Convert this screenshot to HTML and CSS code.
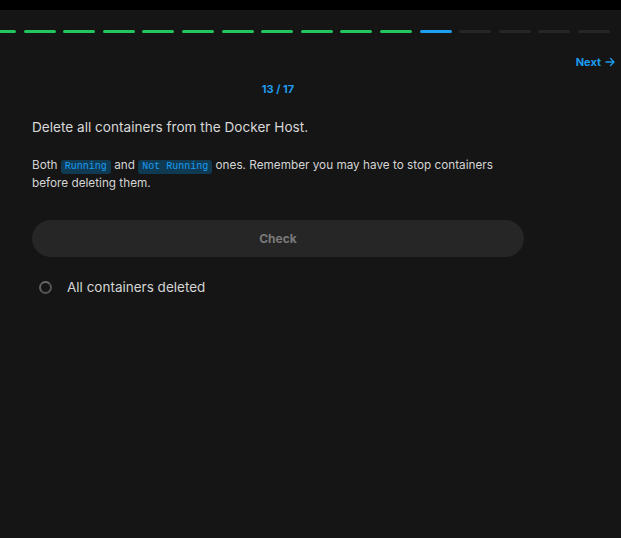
FILE: index.html
```html
<!DOCTYPE html>
<html lang="en">
<head>
<meta charset="utf-8">
<title>Task 13 / 17</title>
<link rel="stylesheet" href="styles.css">
</head>
<body>
<div class="topbar"></div>
<div class="progress">
  <span class="seg done"></span><span class="seg done"></span><span class="seg done"></span><span class="seg done"></span>
  <span class="seg done"></span><span class="seg done"></span><span class="seg done"></span><span class="seg done"></span>
  <span class="seg done"></span><span class="seg done"></span><span class="seg done"></span><span class="seg done"></span>
  <span class="seg current"></span>
  <span class="seg"></span><span class="seg"></span><span class="seg"></span><span class="seg"></span>
</div>
<div class="nav">
  <a class="next" href="#">Next
    <svg width="10" height="10" viewBox="0 0 10 10" fill="none" stroke="currentColor" stroke-width="1.4" stroke-linecap="round" stroke-linejoin="round"><path d="M1 5h8M5.5 1.5L9 5l-3.5 3.5"/></svg>
  </a>
</div>
<main class="content">
  <div class="counter">13 / 17</div>
  <h1 class="title">Delete all containers from the Docker Host.</h1>
  <p class="desc">Both <code>Running</code> and <code>Not Running</code> ones. Remember you may have to stop containers before deleting them.</p>
  <button class="check">Check</button>
  <div class="task">
    <span class="spinner"></span>
    <span class="task-label">All containers deleted</span>
  </div>
</main>
</body>
</html>
```
FILE: styles.css
```css
* { box-sizing: border-box; }
html, body {
  margin: 0;
  padding: 0;
  background: #151515;
  height: 100%;
}
body {
  font-family: Inter, "Noto Sans", sans-serif;
  color: #d4d4d4;
  overflow: hidden;
}
.topbar {
  height: 10px;
  background: #000;
}
.progress {
  display: flex;
  justify-content: flex-end;
  gap: 7.6px;
  padding-right: 11px;
  margin-top: 20px;
  height: 3px;
  overflow: hidden;
}
.seg {
  flex: 0 0 32px;
  height: 3px;
  border-radius: 2px;
  background: #262626;
}
.seg.done { background: #22c55e; }
.seg.current { background: #1ea0f0; }
.nav {
  display: flex;
  justify-content: flex-end;
  padding-right: 6px;
  margin-top: 22px;
}
.next {
  display: flex;
  align-items: center;
  gap: 4px;
  font-size: 11px;
  font-weight: 700;
  color: #1d9bf0;
  text-decoration: none;
  line-height: 14px;
}
.content {
  width: 492px;
  margin-left: 32px;
}
.counter {
  text-align: center;
  font-size: 11px;
  font-weight: 700;
  color: #1d9bf0;
  margin-top: 13px;
  line-height: 14px;
}
.title {
  font-size: 13.6px;
  font-weight: 400;
  margin: 21px 0 0;
  line-height: 20px;
  color: #d8d8d8;
}
.desc {
  font-size: 11.75px;
  line-height: 18px;
  margin: 19px 0 0;
  color: #d4d4d4;
}
.desc code {
  display: inline-block;
  font-family: "Liberation Mono", "DejaVu Sans Mono", monospace;
  font-size: 10px;
  line-height: 14px;
  vertical-align: 0;
  color: #1d9bf0;
  background: #0f3a52;
  border-radius: 3px;
  padding: 0 4px;
}
.check {
  display: block;
  width: 100%;
  height: 37px;
  margin-top: 28px;
  border: none;
  border-radius: 19px;
  background: #262626;
  color: #7a7a7a;
  font-family: Inter, "Noto Sans", sans-serif;
  font-size: 12px;
  font-weight: 700;
}
.task {
  display: flex;
  align-items: center;
  margin-top: 21px;
  padding-left: 7px;
  gap: 15px;
}
.spinner {
  width: 13px;
  height: 13px;
  border-radius: 50%;
  border: 2px solid #555;
  border-top-color: #6a6a6a;
  border-left-color: #626262;
}
.task-label {
  font-size: 13.5px;
  line-height: 18px;
}
```
